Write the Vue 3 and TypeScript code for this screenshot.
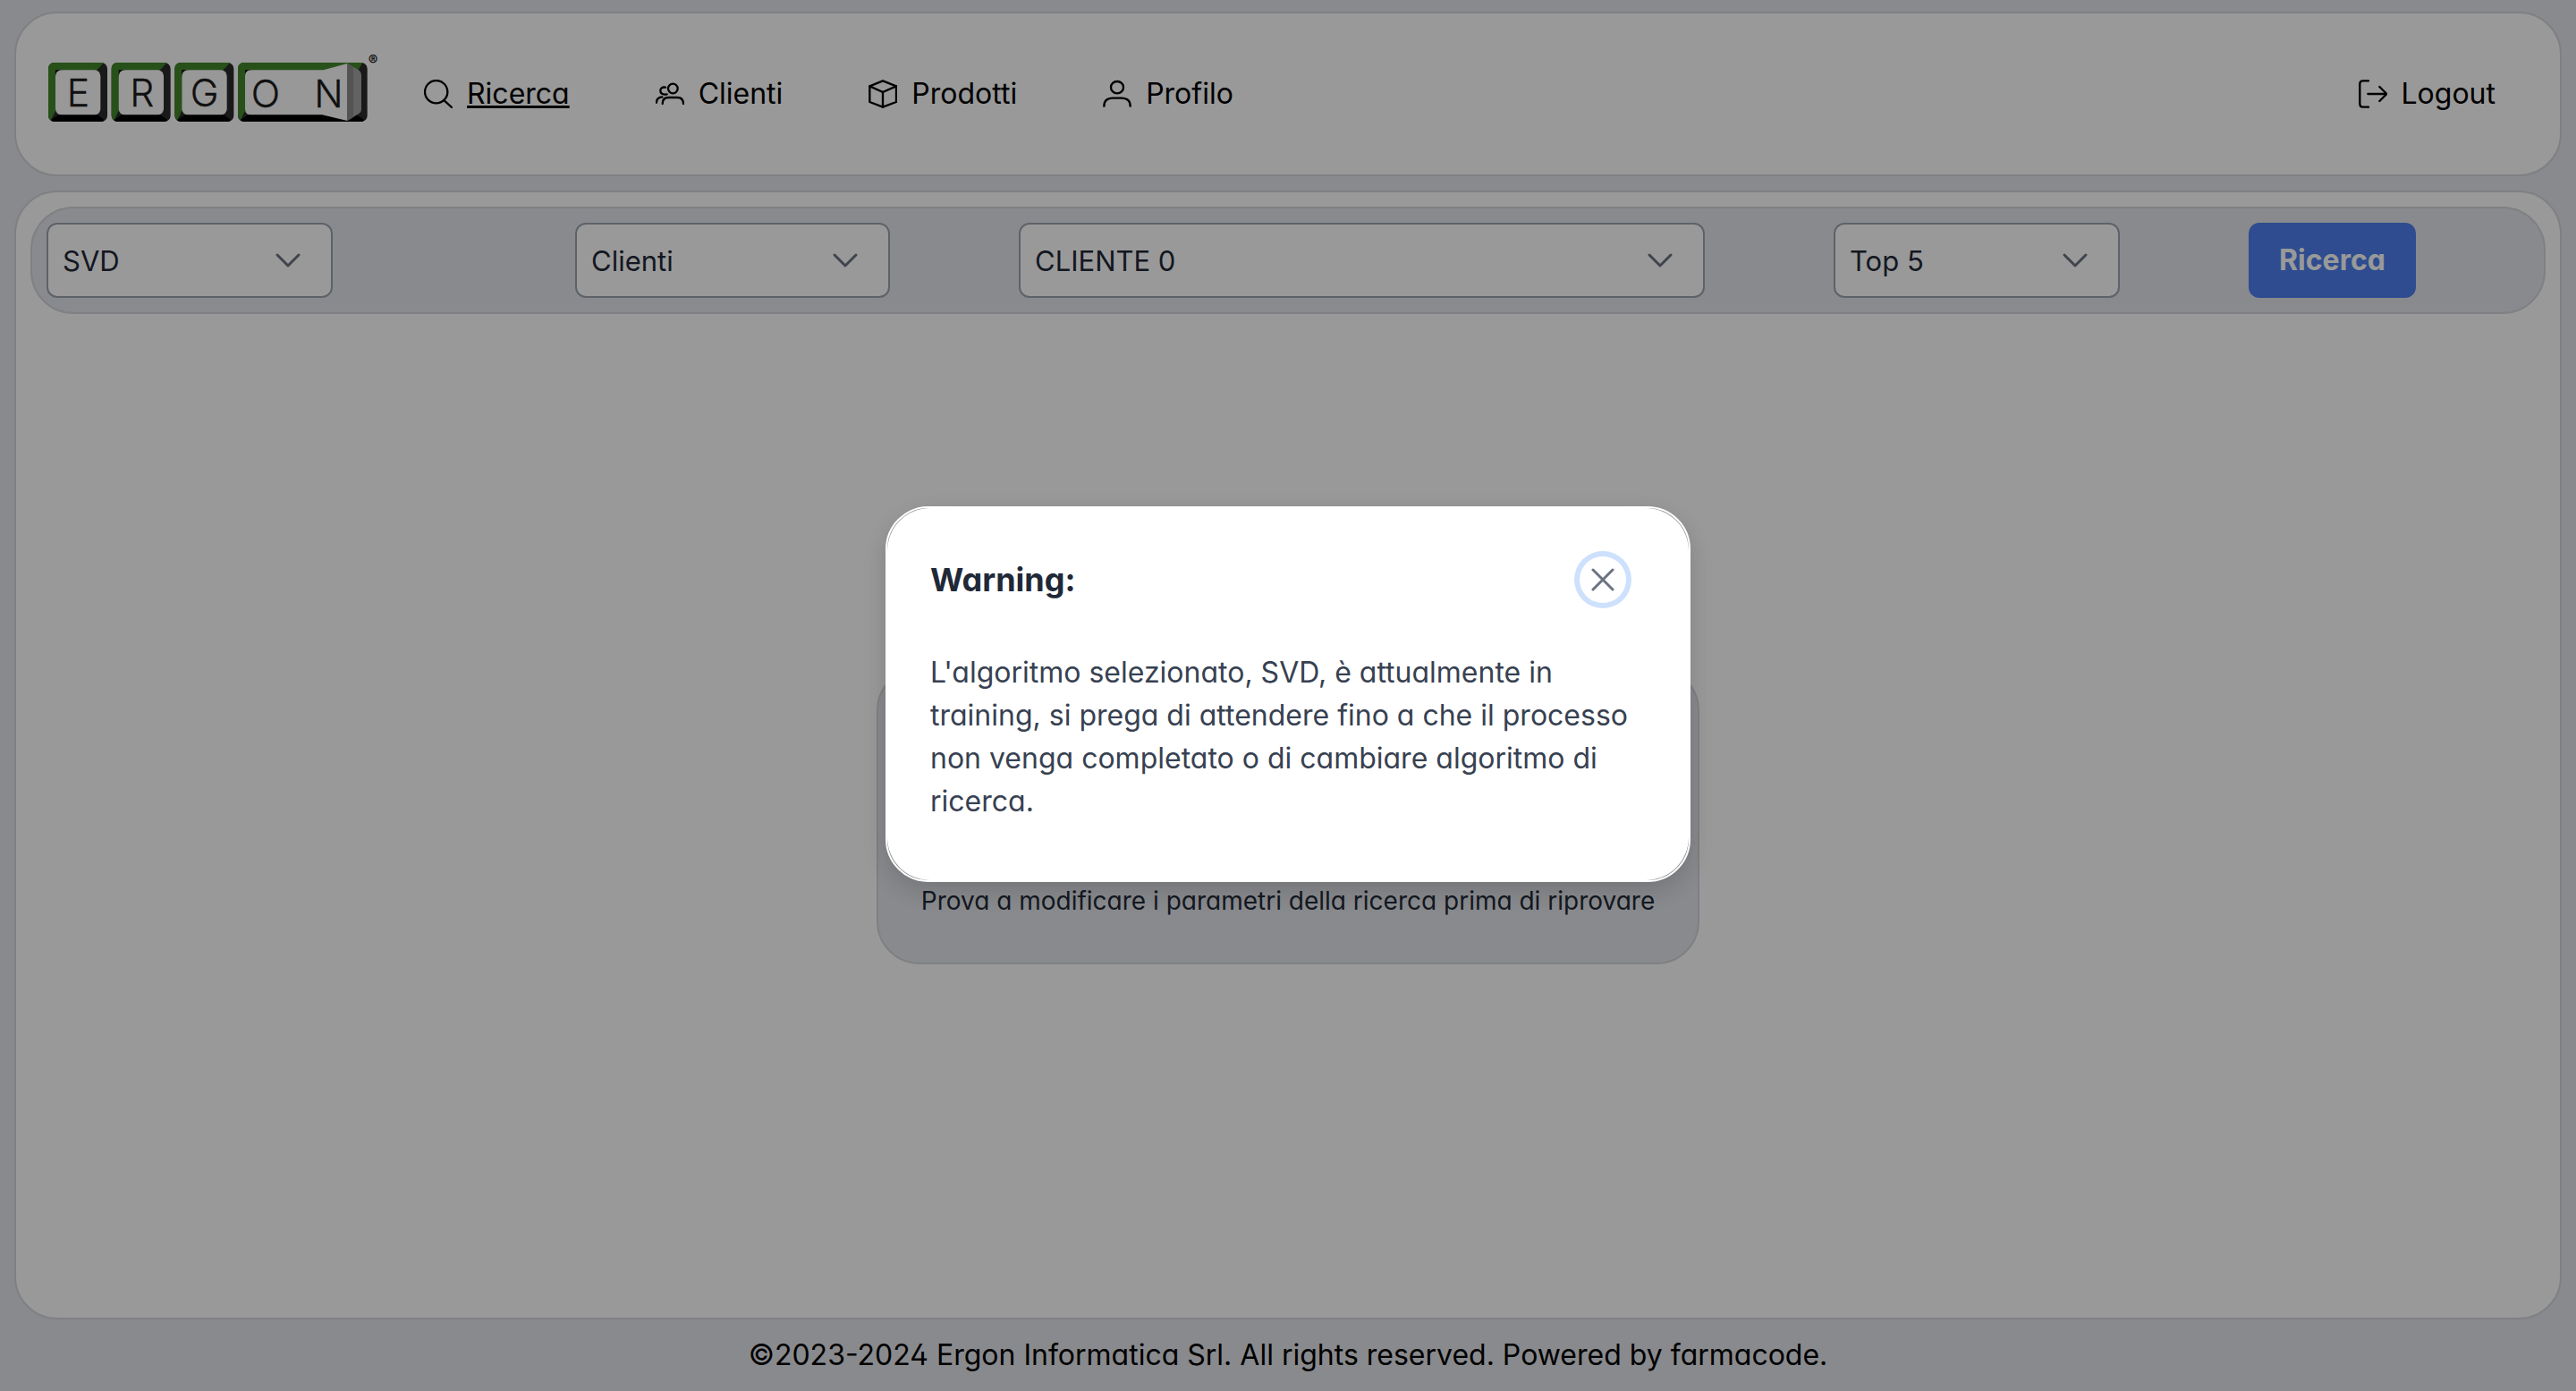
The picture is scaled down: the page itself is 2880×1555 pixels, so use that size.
<script setup lang="ts">
import { ref } from 'vue'

interface NavItem {
  label: string
  icon: string[]
  active?: boolean
}

interface Filter {
  id: string
  label: string
  value: string
}

const navItems: NavItem[] = [
  { label: 'Ricerca', active: true, icon: ['M79 41A38 38 0 1 1 3 41A38 38 0 1 1 79 41Z', 'M68 70L93 93'] },
  {
    label: 'Clienti',
    icon: [
      'M74 30A16 16 0 1 1 42 30A16 16 0 1 1 74 30Z',
      'M23 81C23 68 30 60 43 60H72C86 60 93 68 93 81',
      'M33 26C22 24 15 30 16 39C17 47 26 52 38 49',
      'M3 77C3 66 9 59 22 58',
    ],
  },
  { label: 'Prodotti', icon: ['M48 4L93 22V75L48 92L4 75V22Z', 'M4 22L48 42L93 22', 'M48 42V92'] },
  {
    label: 'Profilo',
    icon: ['M69 26A21 20 0 1 1 27 26A21 20 0 1 1 69 26Z', 'M4 89C4 70 16 62 34 62H62C80 62 92 70 92 89'],
  },
]

const logoutIcon = ['M33 4H14Q4 4 4 14V82Q4 92 14 92H33', 'M31 48H93', 'M70 24L94 48L70 72']

const filters = ref<Filter[]>([
  { id: 'algoritmo', label: 'Algoritmo', value: 'SVD' },
  { id: 'oggetto', label: 'Oggetto', value: 'Clienti' },
  { id: 'cliente', label: 'Cliente', value: 'CLIENTE 0' },
  { id: 'risultati', label: 'Risultati', value: 'Top 5' },
])

const dialogOpen = ref(true)
</script>

<template>
  <div class="page">
    <header class="topbar panel">
      <svg class="logo" viewBox="156 150 1122 330" role="img" aria-label="Ergon">
        <g v-for="x in [162, 374, 586]" :key="x" :transform="`translate(${x} 0)`">
          <rect x="0" y="210" width="198" height="198" rx="20" fill="#2b2b2b" />
          <path d="M20 210H186L160 238H40L24 260V372L8 404Q0 398 0 388V230Q0 210 20 210Z" fill="#42872a" />
          <path d="M8 402L40 382H160L188 402Q184 408 178 408H20Q12 408 8 402Z" fill="#000" />
          <path d="M24 262V235H52Z" fill="#000" />
          <rect x="24" y="235" width="151" height="150" rx="20" fill="#fdfdfd" />
        </g>
        <rect x="798" y="210" width="434" height="198" rx="20" fill="#2b2b2b" />
        <path d="M818 210H1216L1200 238H838L822 260V372L806 404Q798 398 798 388V230Q798 210 818 210Z" fill="#42872a" />
        <path d="M806 402L838 382H1190L1222 402Q1218 408 1212 408H818Q810 408 806 402Z" fill="#000" />
        <path d="M822 262V235H850Z" fill="#000" />
        <path d="M842 235H1085L1165 213V405L1080 385H842Q822 385 822 365V255Q822 235 842 235Z" fill="#fdfdfd" />
        <path d="M1165 213L1205 236Q1212 242 1212 252V368Q1212 376 1204 381L1165 405Z" fill="#a3a3a3" />
        <path d="M1165 213L1185 225V393L1165 405Z" fill="#8a8a8a" />
        <g class="logo-text">
          <text x="262" y="356">E</text>
          <text x="476" y="356">R</text>
          <text x="686" y="356">G</text>
          <text x="891" y="360">O</text>
          <text x="1102" y="360">N</text>
        </g>
        <text class="logo-mark" x="1251" y="220">®</text>
      </svg>
      <nav class="nav">
        <a v-for="item in navItems" :key="item.label" href="#" class="nav-link" :class="{ active: item.active }">
          <svg class="nav-icon" viewBox="0 0 96 96" aria-hidden="true">
            <path v-for="d in item.icon" :key="d" :d="d" />
          </svg>
          <span>{{ item.label }}</span>
        </a>
      </nav>
      <a href="#" class="nav-link logout">
        <svg class="nav-icon" viewBox="0 0 96 96" aria-hidden="true">
          <path v-for="d in logoutIcon" :key="d" :d="d" />
        </svg>
        <span>Logout</span>
      </a>
    </header>

    <main class="content panel">
      <form class="toolbar" @submit.prevent>
        <div v-for="f in filters" :key="f.id" class="field" :class="f.id">
          <select :id="f.id" v-model="f.value" :aria-label="f.label">
            <option :value="f.value">{{ f.value }}</option>
          </select>
          <svg class="chevron" viewBox="0 0 32 32" aria-hidden="true"><path d="M4 10L16 22L28 10" /></svg>
        </div>
        <button type="submit" class="search">Ricerca</button>
      </form>
      <div class="results">
        <section class="empty">
          <p>Prova a modificare i parametri della ricerca prima di riprovare</p>
        </section>
      </div>
    </main>

    <footer class="footer">©2023-2024 Ergon Informatica Srl. All rights reserved. Powered by farmacode.</footer>

    <div v-if="dialogOpen" class="mask">
      <div class="dialog" role="dialog" aria-modal="true" aria-labelledby="dialog-title">
        <div class="dialog-body">
          <div class="dialog-header">
            <h2 id="dialog-title">Warning:</h2>
            <button type="button" class="close" aria-label="Chiudi" @click="dialogOpen = false">
              <svg viewBox="0 0 26 26" aria-hidden="true"><path d="M2 2L24 24M24 2L2 24" /></svg>
            </button>
          </div>
          <p>
            L'algoritmo selezionato, SVD, è attualmente in training, si prega di attendere fino a che il processo non
            venga completato o di cambiare algoritmo di ricerca.
          </p>
        </div>
      </div>
    </div>
  </div>
</template>

<style>
body {
  background: #e4e6eb;
}
</style>

<style scoped>
.page {
  box-sizing: border-box;
  display: flex;
  flex-direction: column;
  gap: 16px;
  min-height: 100vh;
  padding: 13px 16px 0;
  background: #e4e6eb;
  color: #000;
  font-family: Inter, 'Liberation Sans', sans-serif;
  font-feature-settings: 'cv02', 'cv03', 'cv04', 'cv11';
  font-size: 32px;
  line-height: 48px;
}
.page * {
  box-sizing: border-box;
}
.panel {
  background: #fff;
  border: 2px solid #d4d5da;
  border-radius: 48px;
}
.topbar {
  display: flex;
  align-items: center;
  padding: 35px 24px 35px 34px;
}
.logo {
  width: 374px;
  height: 110px;
}
.logo-text {
  font-family: Inter, 'Liberation Sans', sans-serif;
  font-size: 128px;
  font-weight: 300;
  text-anchor: middle;
  fill: #1c1c1c;
  stroke: #1c1c1c;
  stroke-width: 1;
}
.logo-mark {
  font-size: 48px;
  font-weight: 700;
  text-anchor: middle;
  fill: #222;
}
.nav {
  display: flex;
}
.nav-link {
  display: flex;
  align-items: center;
  gap: 16px;
  padding: 0 48px;
  color: #000;
  text-decoration: none;
}
.active span {
  text-decoration: underline;
}
.logout {
  margin-left: auto;
}
.nav-icon {
  width: 32px;
  height: 32px;
  fill: none;
  stroke: #000;
  stroke-width: 7;
  stroke-linecap: round;
  stroke-linejoin: round;
}
.content {
  flex: 1;
  display: flex;
  flex-direction: column;
  padding: 16px;
}
.toolbar {
  display: grid;
  grid-template-columns: 447fr 352fr 767fr 320fr 314fr;
  gap: 144px;
  padding: 16px;
  background: #e4e6eb;
  border: 2px solid #d4d5da;
  border-radius: 48px;
}
.field {
  position: relative;
}
.algoritmo {
  width: 320px;
}
select {
  display: block;
  width: 100%;
  height: 84px;
  padding: 2px 96px 0 16px;
  appearance: none;
  background: #fff;
  border: 2px solid #9ca3af;
  border-radius: 12px;
  color: #1f2937;
  font: inherit;
  font-size: 31px;
}
.chevron {
  position: absolute;
  top: 26px;
  right: 34px;
  width: 32px;
  height: 32px;
  pointer-events: none;
  fill: none;
  stroke: #6b7280;
  stroke-width: 3;
  stroke-linecap: round;
  stroke-linejoin: round;
}
.search {
  width: 187px;
  height: 84px;
  padding: 0;
  background: #4e7fee;
  border: 0;
  border-radius: 12px;
  color: #fff;
  font: inherit;
  font-feature-settings: inherit;
  font-weight: 700;
}
.results {
  flex: 1;
  display: flex;
  align-items: center;
  justify-content: center;
  padding-top: 16px;
}
.empty {
  display: flex;
  align-items: flex-end;
  min-height: 332px;
  padding: 48px;
  background: #e4e6eb;
  border: 2px solid #d4d5da;
  border-radius: 48px;
  color: #1f2937;
  font-size: 28px;
  line-height: 42px;
}
p {
  margin: 0;
}
.footer {
  margin-top: -16px;
  padding: 16px 0;
  text-align: center;
}
.mask {
  position: fixed;
  inset: 0;
  display: flex;
  align-items: center;
  justify-content: center;
  padding-bottom: 3px;
  background: rgba(0, 0, 0, 0.4);
}
.dialog {
  width: 900px;
  max-width: 90vw;
  border: 2px solid #fff;
  border-radius: 48px;
  box-shadow: 0 10px 30px rgba(0, 0, 0, 0.16);
}
.dialog-body {
  padding: 0 48px 64px;
  background: #fff;
  border-radius: 48px;
  color: #374151;
}
.dialog-header {
  display: flex;
  align-items: center;
  justify-content: space-between;
  height: 160px;
  padding-right: 22px;
}
h2 {
  margin: 0;
  color: #1f2937;
  font-size: 36px;
  font-weight: 700;
}
.close {
  display: flex;
  align-items: center;
  justify-content: center;
  width: 52px;
  height: 52px;
  padding: 0;
  background: #fff;
  border: 0;
  border-radius: 50%;
  box-shadow: 0 0 0 6px #cde1fd;
}
.close svg {
  width: 26px;
  height: 26px;
  fill: none;
  stroke: #6b7280;
  stroke-width: 3;
  stroke-linecap: round;
}
</style>
